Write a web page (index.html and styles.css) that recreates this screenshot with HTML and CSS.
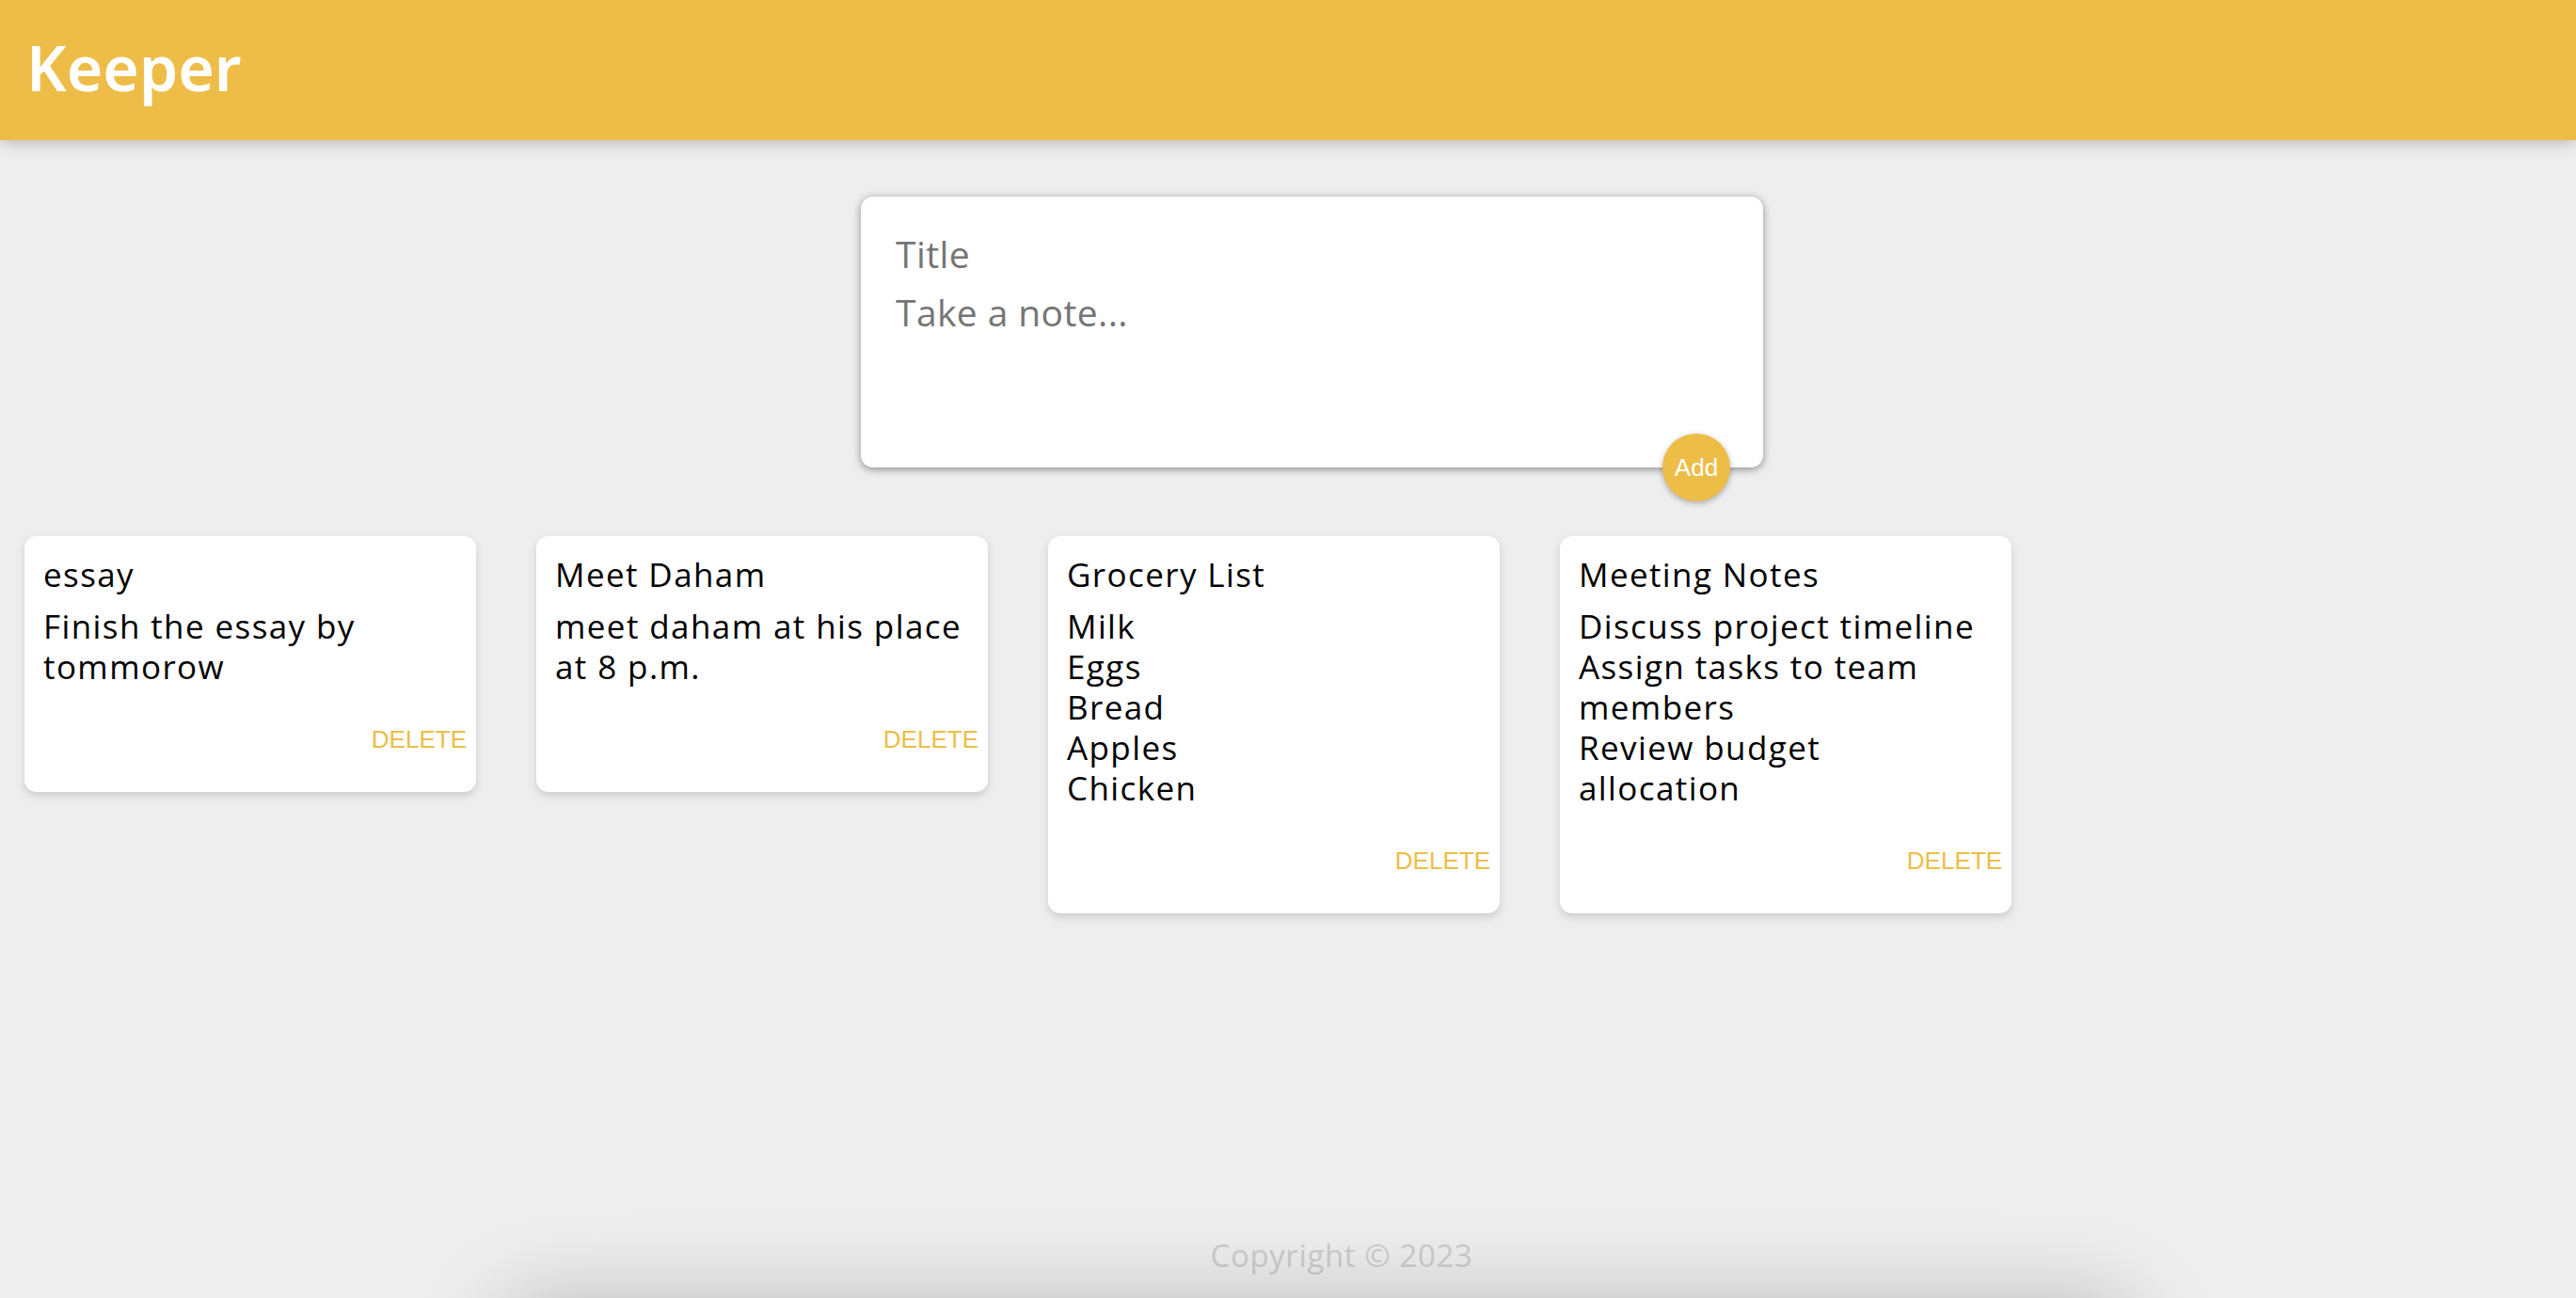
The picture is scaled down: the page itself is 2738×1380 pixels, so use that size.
FILE: index.html
```html
<!DOCTYPE html>
<html lang="en">
<head>
<meta charset="utf-8">
<title>Keeper</title>
<link rel="stylesheet" href="styles.css">
</head>
<body>
<div class="page">
<header class="app-header">
  <h1 class="logo">Keeper</h1>
</header>
<main class="content">
  <form class="create-note">
    <input class="note-title-input" type="text" placeholder="Title">
    <textarea class="note-body-input" placeholder="Take a note..."></textarea>
    <button class="add-btn" type="button">Add</button>
  </form>
  <section class="notes">
    <article class="note">
      <h2 class="note-title">essay</h2>
      <p class="note-body">Finish the essay by
tommorow</p>
      <div class="note-actions"><button class="delete-btn" type="button">DELETE</button></div>
    </article>
    <article class="note">
      <h2 class="note-title">Meet Daham</h2>
      <p class="note-body">meet daham at his place
at 8 p.m.</p>
      <div class="note-actions"><button class="delete-btn" type="button">DELETE</button></div>
    </article>
    <article class="note">
      <h2 class="note-title">Grocery List</h2>
      <p class="note-body">Milk
Eggs
Bread
Apples
Chicken</p>
      <div class="note-actions"><button class="delete-btn" type="button">DELETE</button></div>
    </article>
    <article class="note">
      <h2 class="note-title">Meeting Notes</h2>
      <p class="note-body">Discuss project timeline
Assign tasks to team
members
Review budget
allocation</p>
      <div class="note-actions"><button class="delete-btn" type="button">DELETE</button></div>
    </article>
  </section>
</main>
<footer class="app-footer">
  <p class="copyright">Copyright © 2023</p>
</footer>
</div>
</body>
</html>
```
FILE: styles.css
```css
html, body {
  margin: 0;
  padding: 0;
}
body {
  background: #eeeeee;
  font-family: "Open Sans", "Noto Sans", sans-serif;
}
.page {
  height: 1380px;
  display: flex;
  flex-direction: column;
  position: relative;
  overflow: hidden;
}
.page::after {
  content: "";
  position: absolute;
  left: 540px;
  width: 1720px;
  top: 1392px;
  height: 100px;
  border-radius: 40px;
  box-shadow: 0 0 90px 10px rgba(0, 0, 0, 0.22);
}
.app-header {
  flex: none;
  background: #edbd47;
  height: 149px;
  box-sizing: border-box;
  padding: 38px 0 0 28px;
  box-shadow: 0 0 18px 0 rgba(0, 0, 0, 0.3);
  position: relative;
  z-index: 1;
}
.logo {
  margin: 0;
  color: #ffffff;
  font-family: "Noto Sans", sans-serif;
  font-weight: 600;
  font-size: 66px;
  line-height: 66px;
  letter-spacing: 0;
}
.content {
  flex: 1;
}
.create-note {
  position: relative;
  box-sizing: border-box;
  width: 959px;
  height: 288px;
  margin: 60px 0 0 915px;
  padding: 30px 37px 30px 37px;
  background: #ffffff;
  border-radius: 13px;
  box-shadow: 0 2px 9px rgb(138, 137, 137);
  display: flex;
  flex-direction: column;
}
.note-title-input,
.note-body-input {
  border: none;
  outline: none;
  padding: 0;
  margin: 0;
  width: 100%;
  font-family: "Open Sans", sans-serif;
  font-size: 39px;
  letter-spacing: 0.4px;
  color: #222;
  background: transparent;
  resize: none;
}
.note-title-input {
  height: 62px;
  line-height: 62px;
}
.note-body-input {
  flex: 1;
  line-height: 62px;
  overflow: hidden;
}
.note-title-input::placeholder,
.note-body-input::placeholder {
  color: #757575;
  opacity: 1;
}
.add-btn {
  position: absolute;
  right: 35px;
  bottom: -36px;
  width: 72px;
  height: 72px;
  border-radius: 50%;
  border: none;
  padding: 0;
  background: #edbd47;
  color: #ffffff;
  font-family: "Liberation Sans", Arial, sans-serif;
  font-size: 26px;
  box-shadow: 0 2px 6px rgba(0, 0, 0, 0.3);
}
.notes {
  display: flex;
  align-items: flex-start;
  gap: 64px;
  margin-top: 73px;
  padding-left: 26px;
}
.note {
  box-sizing: border-box;
  width: 480px;
  padding: 19px 20px 41px 20px;
  background: #ffffff;
  border-radius: 13px;
  box-shadow: 0 4px 9px #cccccc;
}
.note-title {
  margin: 0 0 12px 0;
  font-size: 35px;
  line-height: 43px;
  font-weight: 400;
  letter-spacing: 1.4px;
  color: #000;
}
.note-body {
  margin: 0;
  font-size: 35px;
  line-height: 43px;
  letter-spacing: 1.4px;
  white-space: pre;
  color: #000;
}
.note-actions {
  display: flex;
  justify-content: flex-end;
  margin: 41px -10px 0 0;
}
.delete-btn {
  border: none;
  background: none;
  padding: 0;
  color: #edbd47;
  font-family: "Liberation Sans", Arial, sans-serif;
  font-size: 26px;
  line-height: 30px;
}
.app-footer {
  flex: none;
  height: 65px;
  padding-left: 114px;
  text-align: center;
}
.copyright {
  margin: 0;
  color: #cccccc;
  font-size: 33px;
  line-height: 40px;
  letter-spacing: 0.6px;
}
```
